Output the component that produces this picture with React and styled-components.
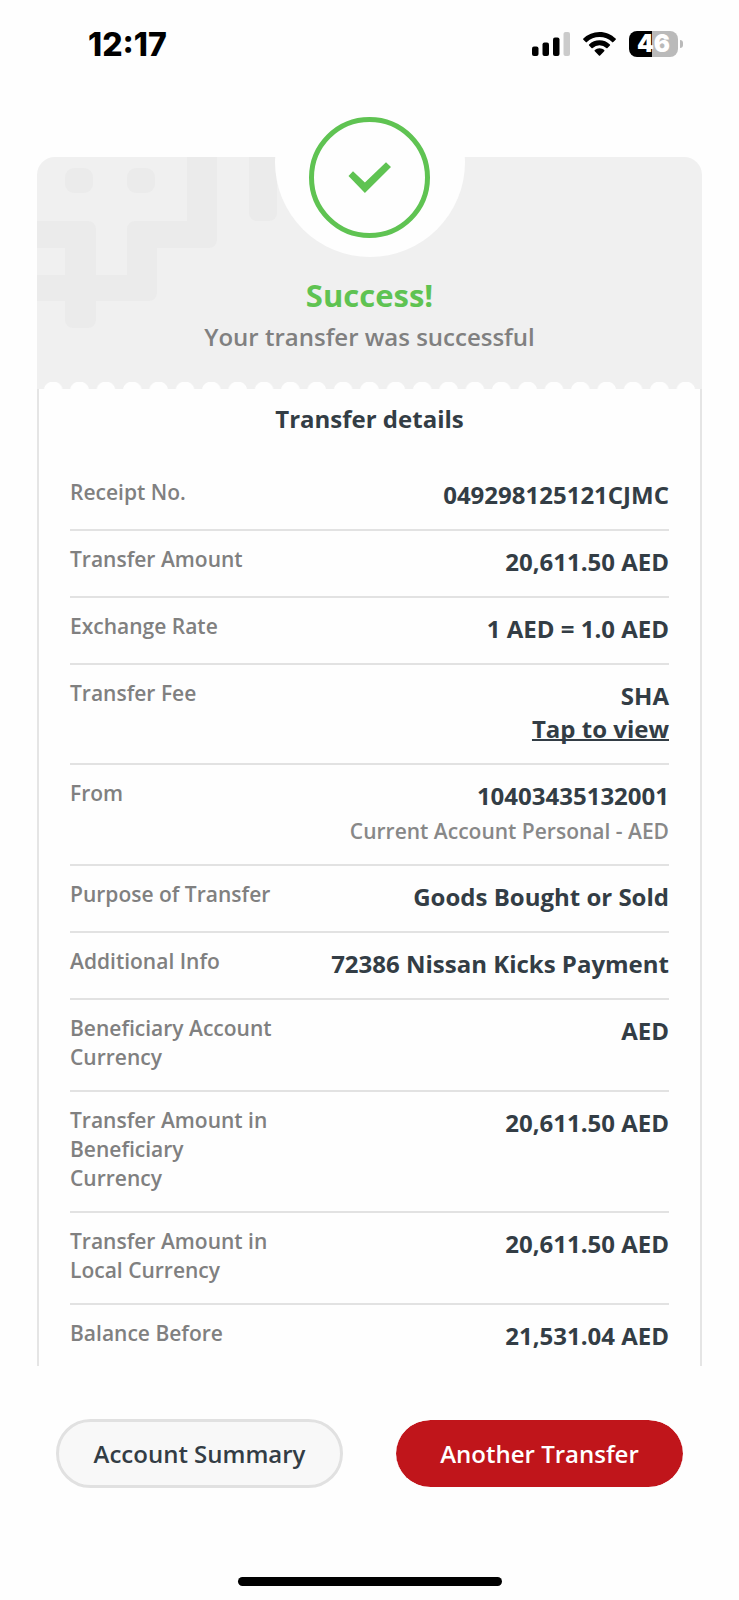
import React from "react"

import styled, { createGlobalStyle } from "styled-components"

const GlobalStyle = createGlobalStyle`
  * { box-sizing: border-box; }
  body {
    margin: 0;
    background: #fefefe;
    color: #333d45;
    font-family: "Open Sans", "Noto Sans", sans-serif;
  }
`

const Page = styled.div`
  min-height: 100vh;
  display: flex;
  flex-direction: column;
`

const StatusBar = styled.header`
  display: flex;
  align-items: center;
  justify-content: space-between;
  height: 88px;
  padding: 0 56px 0 88px;
`

const Clock = styled.time`
  padding-top: 2px;
  font-family: Inter, sans-serif;
  font-size: 32px;
  font-weight: 800;
  line-height: 40px;
  color: #000;
`

const StatusIcons = styled.div`
  display: flex;
  align-items: center;
  gap: 13px;
`

const Battery = styled.div`
  display: flex;
  align-items: center;
  gap: 2px;
`

const BatteryLevel = styled.div`
  width: 49px;
  height: 26px;
  border-radius: 8px;
  background: linear-gradient(to right, #000 46%, #bababa 46%);
  font-family: Inter, sans-serif;
  font-size: 24px;
  font-weight: 900;
  line-height: 26px;
  text-align: center;
  color: #fff;
`

const BatteryTip = styled.div`
  width: 3px;
  height: 8px;
  border-radius: 0 4px 4px 0;
  background: #bababa;
`

const Receipt = styled.main`
  padding: 69px 37px 0;
`

const Banner = styled.section`
  position: relative;
  display: flex;
  flex-direction: column;
  align-items: center;
  padding-bottom: 32px;
  border-radius: 18px 18px 0 0;
  background: #f0f0f0;
`

const Pattern = styled.svg`
  position: absolute;
  top: 0;
  left: 0;
  fill: #ebebeb;
`

// white disc that bites into the top edge of the banner
const Notch = styled.div`
  position: relative;
  display: flex;
  justify-content: center;
  align-items: flex-end;
  width: 190px;
  height: 190px;
  margin-top: -90px;
  padding-bottom: 19px;
  border-radius: 50%;
  background: #fefefe;
`

const Ring = styled.div`
  display: flex;
  align-items: center;
  justify-content: center;
  width: 121px;
  height: 121px;
  border: 5px solid #5fc352;
  border-radius: 50%;
`

const Title = styled.h1`
  margin: 16px 0 0;
  font-size: 31px;
  font-weight: 700;
  line-height: 44px;
  color: #5fc352;
`

const Subtitle = styled.p`
  margin: 0;
  font-size: 24px;
  font-weight: 600;
  line-height: 40px;
  color: #808080;
`

const TornEdge = styled.div`
  position: absolute;
  bottom: 0;
  left: 3px;
  right: 3px;
  height: 7px;
  background: radial-gradient(circle at 50% 9px, #fefefe 9px, transparent 10px) 0 0 / 26px 7px round;
`

const Details = styled.section`
  padding: 0 31px;
  border: solid #e5e5e5;
  border-width: 0 2px;
`

const DetailsTitle = styled.h2`
  margin: 0;
  padding: 10px 0 25px;
  font-size: 24px;
  font-weight: 700;
  line-height: 40px;
  text-align: center;
`

const List = styled.dl`
  margin: 0;
`

const Row = styled.div`
  display: flex;
  justify-content: space-between;
  padding: 14px 0 18px;
  border-bottom: 2px solid #e2e2e2;
  &:last-child { border-bottom: none; padding-bottom: 14px; }
`

const Label = styled.dt`
  width: 35%;
  font-size: 21px;
  font-weight: 600;
  line-height: 29px;
  color: #808080;
`

const Value = styled.dd`
  display: flex;
  flex-direction: column;
  align-items: flex-end;
  margin: 0;
  font-size: 24px;
  font-weight: 700;
  line-height: 33px;
`

const ValueLink = styled.a`
  color: inherit;
  text-decoration: underline;
  text-decoration-thickness: 2px;
  text-decoration-skip-ink: none;
`

const ValueNote = styled.span`
  margin-top: 5px;
  font-size: 21px;
  font-weight: 600;
  line-height: 29px;
  color: #888;
`

const Actions = styled.footer`
  display: grid;
  grid-template-columns: 1fr 1fr;
  gap: 53px;
  margin-top: auto;
  padding: 0 56px;
`

const Button = styled.button`
  height: 69px;
  border: 3px solid ${props => props.$primary ? "#fefefe" : "#e1e1e1"};
  border-width: ${props => props.$primary ? "1px 0" : "3px"};
  border-radius: 35px;
  background: ${props => props.$primary ? "#c0151b" : "#f8f8f8"};
  background-clip: padding-box;
  font-family: inherit;
  font-size: 24px;
  font-weight: 600;
  color: ${props => props.$primary ? "#fff" : "#333d45"};
`

const HomeIndicator = styled.div`
  width: 264px;
  height: 9px;
  margin: 89px auto 14px;
  border-radius: 5px;
  background: #000;
`

const rows = [
  { label: "Receipt No.", value: "049298125121CJMC" },
  { label: "Transfer Amount", value: "20,611.50 AED" },
  { label: "Exchange Rate", value: "1 AED = 1.0 AED" },
  { label: "Transfer Fee", value: "SHA", link: "Tap to view" },
  { label: "From", value: "10403435132001", note: "Current Account Personal - AED" },
  { label: "Purpose of Transfer", value: "Goods Bought or Sold" },
  { label: "Additional Info", value: "72386 Nissan Kicks Payment" },
  { label: "Beneficiary Account Currency", value: "AED" },
  { label: "Transfer Amount in Beneficiary Currency", value: "20,611.50 AED" },
  { label: "Transfer Amount in Local Currency", value: "20,611.50 AED" },
  { label: "Balance Before", value: "21,531.04 AED" },
]

const SignalIcon = () => (
  <svg width="38" height="24" viewBox="0 0 38 24" aria-hidden="true">
    <rect x="0" y="14.5" width="6.5" height="9.5" rx="2" />
    <rect x="10.5" y="10.5" width="6.5" height="13.5" rx="2" />
    <rect x="21" y="5.5" width="6.5" height="18.5" rx="2" />
    <rect x="31.5" y="0" width="6.5" height="24" rx="2" fill="#cbcbcb" />
  </svg>
)

const WifiIcon = () => (
  <svg width="33" height="24" viewBox="0 0 33 24" aria-hidden="true">
    <path d="M16.5 0C22.8 0 28.5 2.5 32.6 6.6q.6.6 0 1.2l-2.3 2.3q-.6.6-1.2 0A18 18 0 0 0 16.5 5 18 18 0 0 0 3.9 10.1q-.6.6-1.2 0L.4 7.8q-.6-.6 0-1.2A23 23 0 0 1 16.5 0Z" />
    <path d="M16.5 8.2c4 0 7.7 1.6 10.4 4.2q.6.6 0 1.2l-2.4 2.4q-.6.5-1.2 0a10 10 0 0 0-13.6 0q-.6.5-1.2 0l-2.4-2.4q-.6-.6 0-1.2a15 15 0 0 1 10.4-4.2Z" />
    <path d="M16.5 16.2c1.8 0 3.5.7 4.7 1.8q.6.6 0 1.2l-4.1 4.2q-.6.6-1.2 0l-4.1-4.2q-.6-.6 0-1.2a7 7 0 0 1 4.7-1.8Z" />
  </svg>
)

const CheckIcon = () => (
  <svg width="43" height="31" viewBox="0 0 43 31" fill="#5fc352" aria-hidden="true">
    <path d="M.5 14 5 9.3 16.9 20.5 38 .3 43 5 16.9 31Z" />
  </svg>
)

const BannerPattern = () => (
  <Pattern width="240" height="172" viewBox="0 0 240 172" aria-hidden="true">
    <rect x="28" y="11" width="28" height="25" rx="9" />
    <rect x="90" y="11" width="28" height="25" rx="9" />
    <path d="M150 0V64H98a8 8 0 0 0-8 8V118H59V72a8 8 0 0 0-8-8H0V91H28V118H0V144H28V163a8 8 0 0 0 8 8H51a8 8 0 0 0 8-8V144H112a8 8 0 0 0 8-8V91H172a8 8 0 0 0 8-8V0Z" />
    <path d="M212 0V56a8 8 0 0 0 8 8H232a8 8 0 0 0 8-8V0Z" />
  </Pattern>
)

const DetailRow = ({label, value, link, note}) => (
  <Row>
    <Label>{label}</Label>
    <Value>
      {value}
      {link && <ValueLink href="#fee">{link}</ValueLink>}
      {note && <ValueNote>{note}</ValueNote>}
    </Value>
  </Row>
)

const App = () => {

  return (
    <Page>
      <GlobalStyle />
      <StatusBar>
        <Clock>12:17</Clock>
        <StatusIcons>
          <SignalIcon />
          <WifiIcon />
          <Battery>
            <BatteryLevel>46</BatteryLevel>
            <BatteryTip />
          </Battery>
        </StatusIcons>
      </StatusBar>

      <Receipt>
        <Banner>
          <BannerPattern />
          <Notch>
            <Ring>
              <CheckIcon />
            </Ring>
          </Notch>
          <Title>Success!</Title>
          <Subtitle>Your transfer was successful</Subtitle>
          <TornEdge />
        </Banner>

        <Details>
          <DetailsTitle>Transfer details</DetailsTitle>
          <List>
            {rows.map(row => <DetailRow key={row.label} {...row} />)}
          </List>
        </Details>
      </Receipt>

      <Actions>
        <Button type="button">Account Summary</Button>
        <Button type="button" $primary>Another Transfer</Button>
      </Actions>
      <HomeIndicator />
    </Page>
  )
}

export default App
